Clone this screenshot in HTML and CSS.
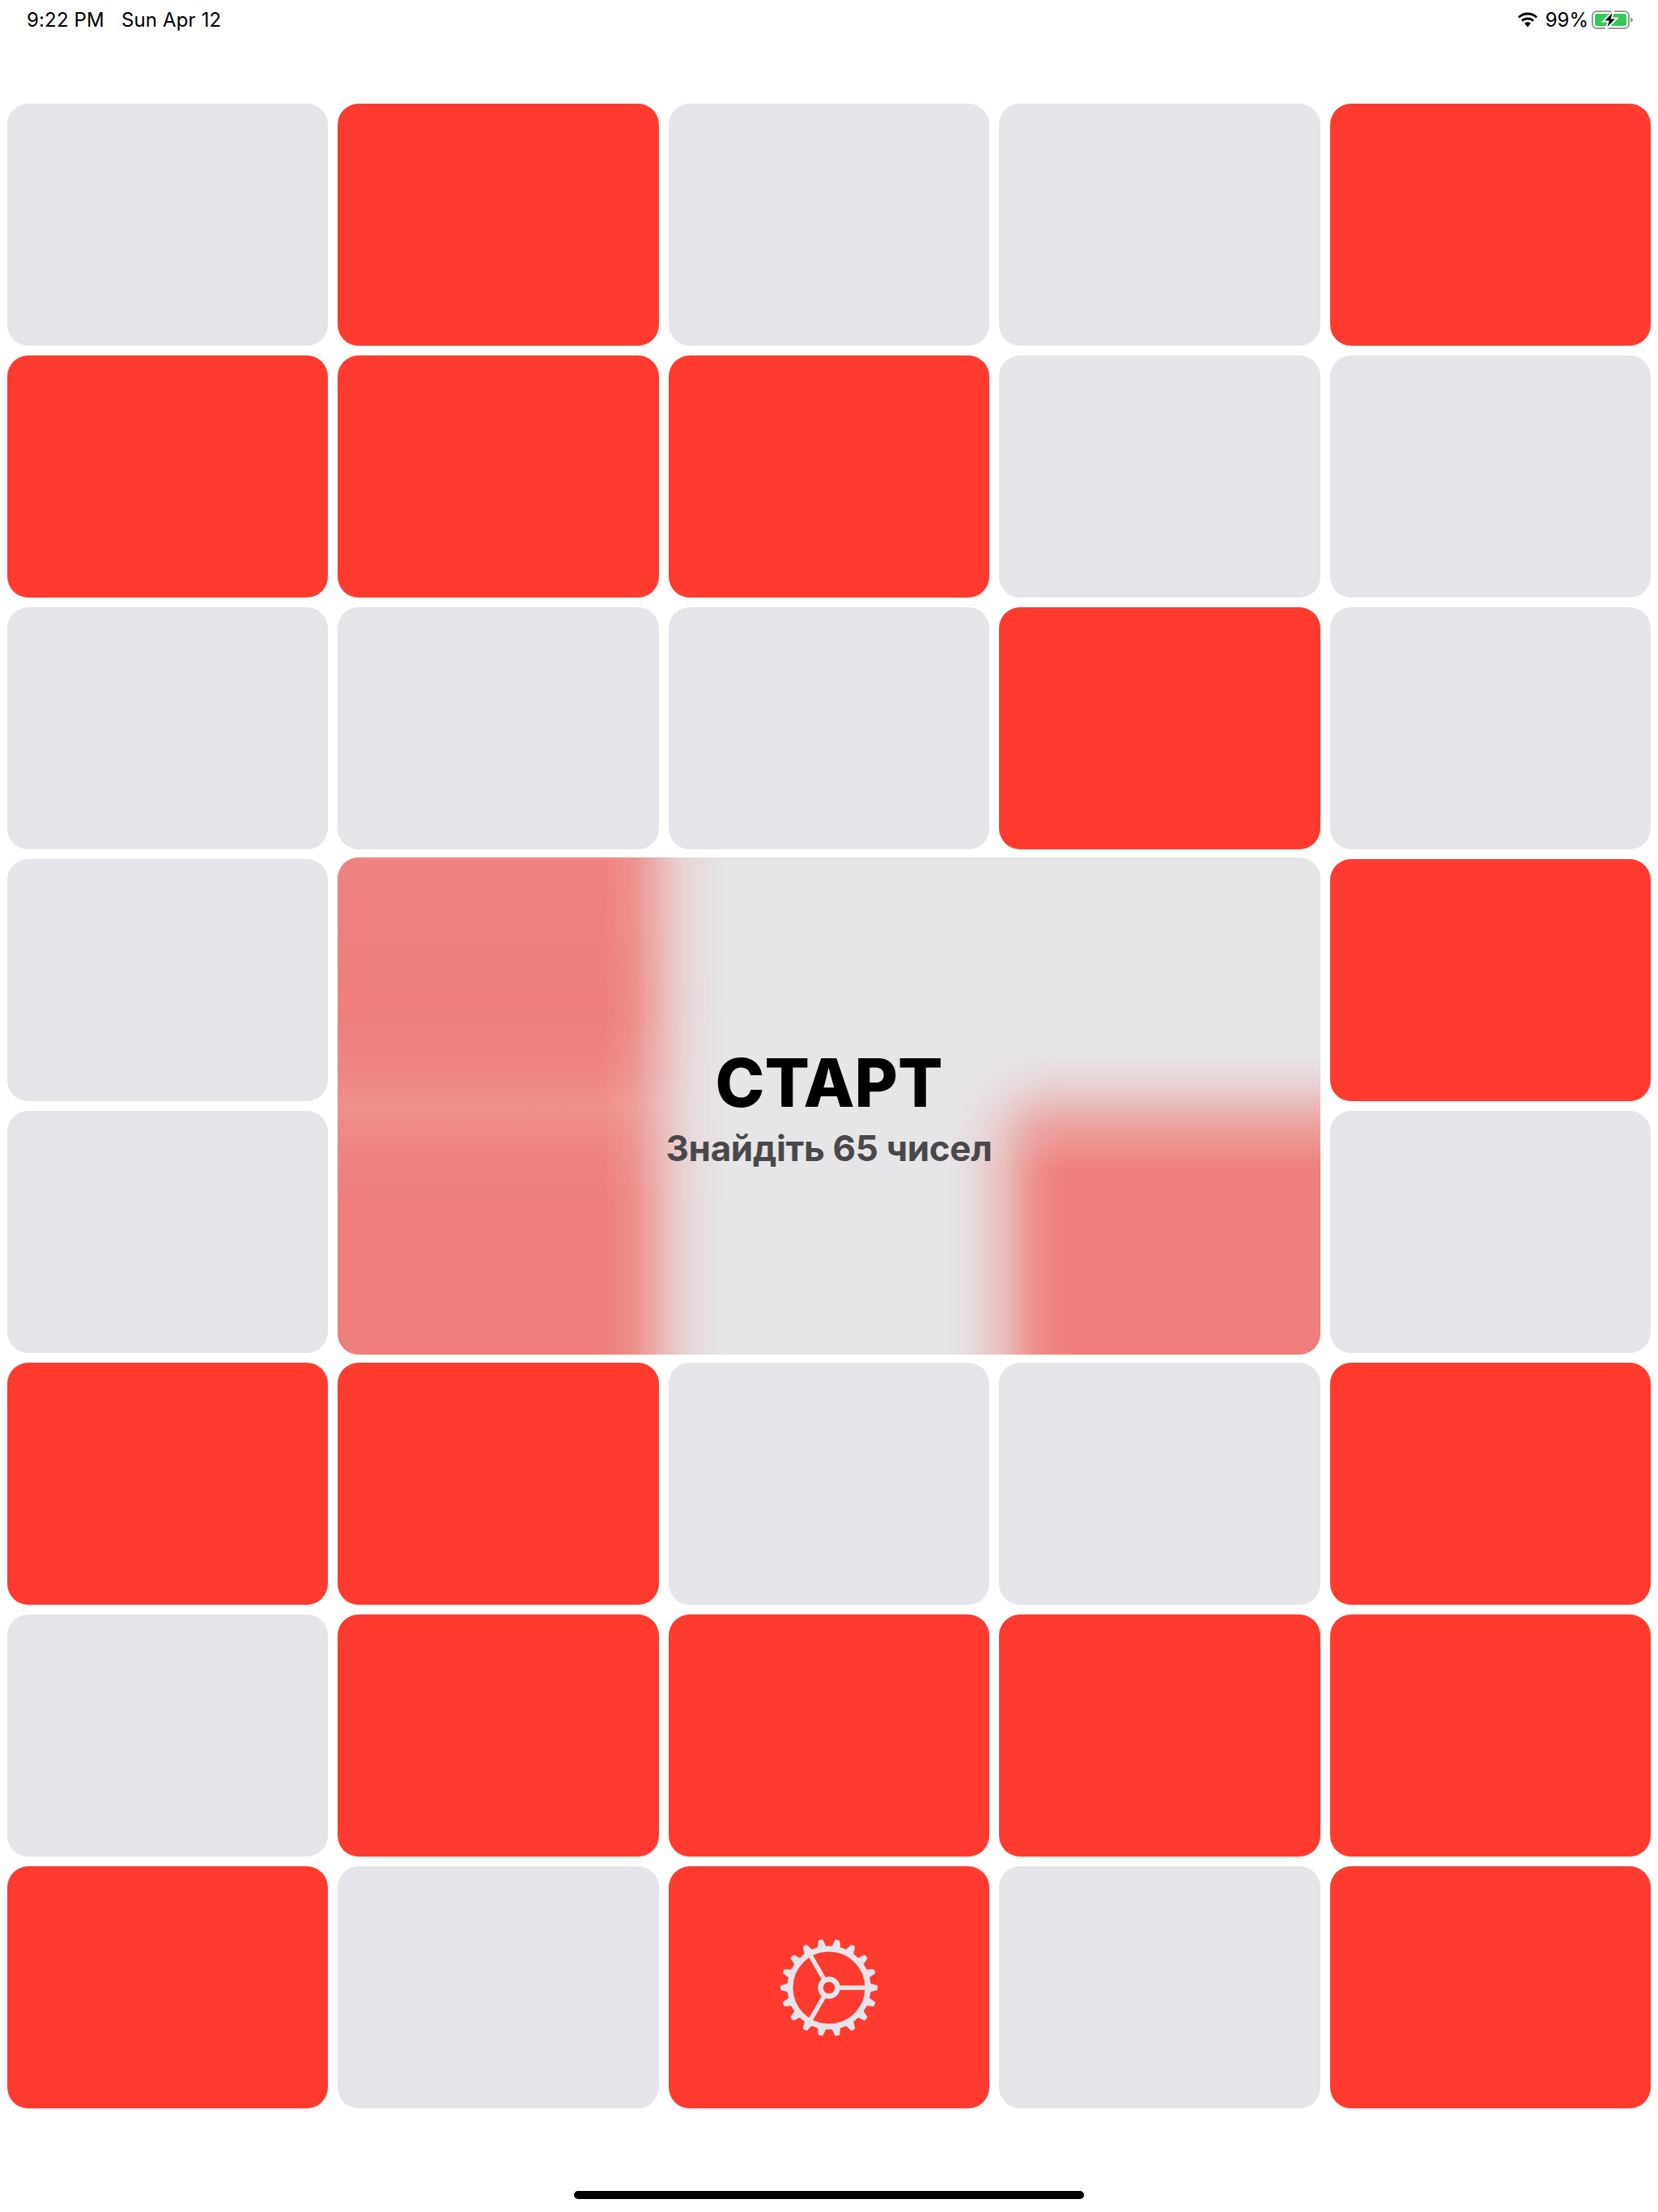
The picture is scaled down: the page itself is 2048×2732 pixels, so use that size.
FILE: index.html
```html
<!DOCTYPE html>
<html lang="uk">
<head>
<meta charset="utf-8">
<title>Старт</title>
<link rel="stylesheet" href="styles.css">
</head>
<body>
<div class="page">
  <header class="status">
    <div class="status-left"><span>9:22 PM</span><span>Sun Apr 12</span></div>
    <div class="status-right">
      <svg class="wifi" width="28" height="20" viewBox="0 0 28 20"><path d="M14 3.6c3.9 0 7.5 1.5 10.2 4l1.9-2.1C23 2.4 18.700 .5 14 .5S5 2.400 1.900 5.500l1.900 2.100c2.700-2.500 6.300-4 10.200-4z"/><path d="M14 9.400c2.300 0 4.400.9 6 2.300l2-2.100c-2.100-2-5-3.200-8-3.200s-5.900 1.200-8 3.200l2 2.100c1.600-1.400 3.700-2.300 6-2.300z"/><path d="M14 12.300c-1.500 0-2.800.5-3.900 1.500L14 18.500l3.900-4.700c-1.100-1-2.400-1.500-3.900-1.500z"/></svg>
      <span class="pct">99%</span>
      <svg class="battery" width="52" height="24" viewBox="0 0 52 24">
        <rect class="bat-shell" x="1" y="1" width="45" height="21" rx="5.500"/>
        <rect class="bat-fill" x="4" y="4" width="39" height="15" rx="2.500"/>
        <path class="bat-nub" d="M48 8.500c1.800.5 3 1.700 3 3s-1.200 2.500-3 3z"/>
        <path class="bat-bolt" d="M27 0 14 13.500h6.500L17.500 23.500 31.500 9.500h-6.500z"/>
      </svg>
    </div>
  </header>

  <main class="grid">
    <div class="cell"></div><div class="cell red"></div><div class="cell"></div><div class="cell"></div><div class="cell red"></div>
    <div class="cell red"></div><div class="cell red"></div><div class="cell red"></div><div class="cell"></div><div class="cell"></div>
    <div class="cell"></div><div class="cell"></div><div class="cell"></div><div class="cell red"></div><div class="cell"></div>
    <div class="cell"></div><div class="cell red"></div><div class="cell"></div><div class="cell"></div><div class="cell red"></div>
    <div class="cell"></div><div class="cell red"></div><div class="cell"></div><div class="cell red"></div><div class="cell"></div>
    <div class="cell red"></div><div class="cell red"></div><div class="cell"></div><div class="cell"></div><div class="cell red"></div>
    <div class="cell"></div><div class="cell red"></div><div class="cell red"></div><div class="cell red"></div><div class="cell red"></div>
    <div class="cell red"></div><div class="cell"></div>
    <div class="cell red gear-cell">
      <svg class="gear" width="124" height="124" viewBox="-62 -62 124 124">
        <defs><path id="tooth" d="M-4 -50 L-1.600 -58.500 L1.600 -58.500 L4 -50 Z"/></defs>
        <g class="teeth">
          <use href="#tooth" transform="rotate(10)"/><use href="#tooth" transform="rotate(30)"/><use href="#tooth" transform="rotate(50)"/>
          <use href="#tooth" transform="rotate(70)"/><use href="#tooth" transform="rotate(90)"/><use href="#tooth" transform="rotate(110)"/>
          <use href="#tooth" transform="rotate(130)"/><use href="#tooth" transform="rotate(150)"/><use href="#tooth" transform="rotate(170)"/>
          <use href="#tooth" transform="rotate(190)"/><use href="#tooth" transform="rotate(210)"/><use href="#tooth" transform="rotate(230)"/>
          <use href="#tooth" transform="rotate(250)"/><use href="#tooth" transform="rotate(270)"/><use href="#tooth" transform="rotate(290)"/>
          <use href="#tooth" transform="rotate(310)"/><use href="#tooth" transform="rotate(330)"/><use href="#tooth" transform="rotate(350)"/>
        </g>
        <g class="wheel">
          <circle r="48"/>
          <circle r="10.500"/>
          <path d="M10.500 0H46M-5.250 -9.090L-23 -39.840M-5.250 9.090L-23 39.840"/>
        </g>
      </svg>
    </div>
    <div class="cell"></div><div class="cell red"></div>

    <section class="start">
      <h1 class="start-title">СТАРТ</h1>
      <p class="start-sub">Знайдіть 65 чисел</p>
    </section>
  </main>

  <div class="home-indicator"></div>
</div>
</body>
</html>
```

FILE: styles.css
```css
* { box-sizing: border-box; }
html, body { margin: 0; padding: 0; background: #fff; }
body { font-family: "Inter", "Liberation Sans", sans-serif; color: #000; }

.page {
  width: 2048px;
  height: 2732px;
  display: flex;
  flex-direction: column;
  overflow: hidden;
}

.status {
  flex: none;
  height: 128px;
  padding: 10px 30px 0 33px;
  display: flex;
  justify-content: space-between;
  align-items: flex-start;
  font-size: 24px;
  line-height: 29px;
}
.status-left { display: flex; gap: 21px; letter-spacing: .15px; }
.status-right { display: flex; align-items: center; height: 29px; }
.wifi { fill: #000; margin-right: 8px; }
.pct { margin-right: 4px; }
.bat-shell { fill: none; stroke: #9a9a9a; stroke-width: 2; }
.bat-fill { fill: #34c759; }
.bat-nub { fill: #9a9a9a; }
.bat-bolt { fill: #000; stroke: #fff; stroke-width: 2; }

.grid {
  flex: none;
  position: relative;
  display: grid;
  grid-template-columns: repeat(5, 1fr);
  grid-auto-rows: 299px;
  gap: 12px;
  padding: 0 9px;
}
.cell { background: #e5e5ea; border-radius: 26px; }
.cell.red { background: #ff3b30; }
.gear-cell { display: flex; align-items: center; justify-content: center; }
.teeth { fill: #e5e5ea; stroke: #e5e5ea; stroke-width: 3; stroke-linejoin: round; }
.wheel { fill: none; stroke: #e5e5ea; }
.wheel circle:first-child { stroke-width: 7; }
.wheel circle:nth-child(2) { stroke-width: 6.500; }
.wheel path { stroke-width: 5.500; }

/* Frosted panel: the blurred cells beneath are painted as soft-edged shapes */
.start {
  --fade-x: linear-gradient(90deg, transparent 19px, rgba(0,0,0,.1) 49px, rgba(0,0,0,.25) 69px, rgba(0,0,0,.4) 89px, rgba(0,0,0,.65) 109px, rgba(0,0,0,.85) 129px, rgba(0,0,0,.95) 149px, #000 169px);
  --fade-y: linear-gradient(180deg, transparent 11px, rgba(0,0,0,.2) 51px, rgba(0,0,0,.5) 84px, rgba(0,0,0,.7) 104px, rgba(0,0,0,.85) 131px, #000 158px);
  --fade-left: linear-gradient(90deg, #000 328px, rgba(0,0,0,.85) 366px, rgba(0,0,0,.62) 386px, rgba(0,0,0,.4) 406px, rgba(0,0,0,.22) 424px, rgba(0,0,0,.1) 446px, transparent 480px);
  grid-column: 2 / 5;
  grid-row: 4 / 6;
  position: absolute;
  inset: -2px 0;
  overflow: hidden;
  border-radius: 26px;
  background: #e6e6e9;
  display: flex;
  flex-direction: column;
  align-items: center;
  justify-content: center;
  text-align: center;
}
.start::before {
  content: "";
  position: absolute;
  top: 0;
  bottom: 0;
  left: 0;
  width: 490px;
  background: linear-gradient(180deg, #ef837f 0, #ee7f7b 190px, #ee8581 255px, #ef908b 307px, #ee8581 360px, #ee7f7b 425px, #ee7f7b 100%);
  -webkit-mask-image: var(--fade-left);
  mask-image: var(--fade-left);
}
.start::after {
  content: "";
  position: absolute;
  top: 230px;
  bottom: 0;
  right: 0;
  width: 480px;
  background: #ee7f7b;
  -webkit-mask-image: var(--fade-x), var(--fade-y);
  mask-image: var(--fade-x), var(--fade-y);
  -webkit-mask-composite: source-in;
  mask-composite: intersect;
}
.start-title {
  position: relative;
  z-index: 1;
  margin: 0;
  font-size: 82px;
  line-height: 100px;
  font-weight: 800;
  letter-spacing: 0;
}
.start-sub {
  position: relative;
  z-index: 1;
  margin: 3px 0 0;
  font-size: 44px;
  line-height: 54px;
  font-weight: 700;
  letter-spacing: -.35px;
  color: #4a4849;
}

.home-indicator {
  flex: none;
  width: 630px;
  height: 10px;
  margin: 102px auto 0;
  background: #000;
  border-radius: 5px;
}
```
